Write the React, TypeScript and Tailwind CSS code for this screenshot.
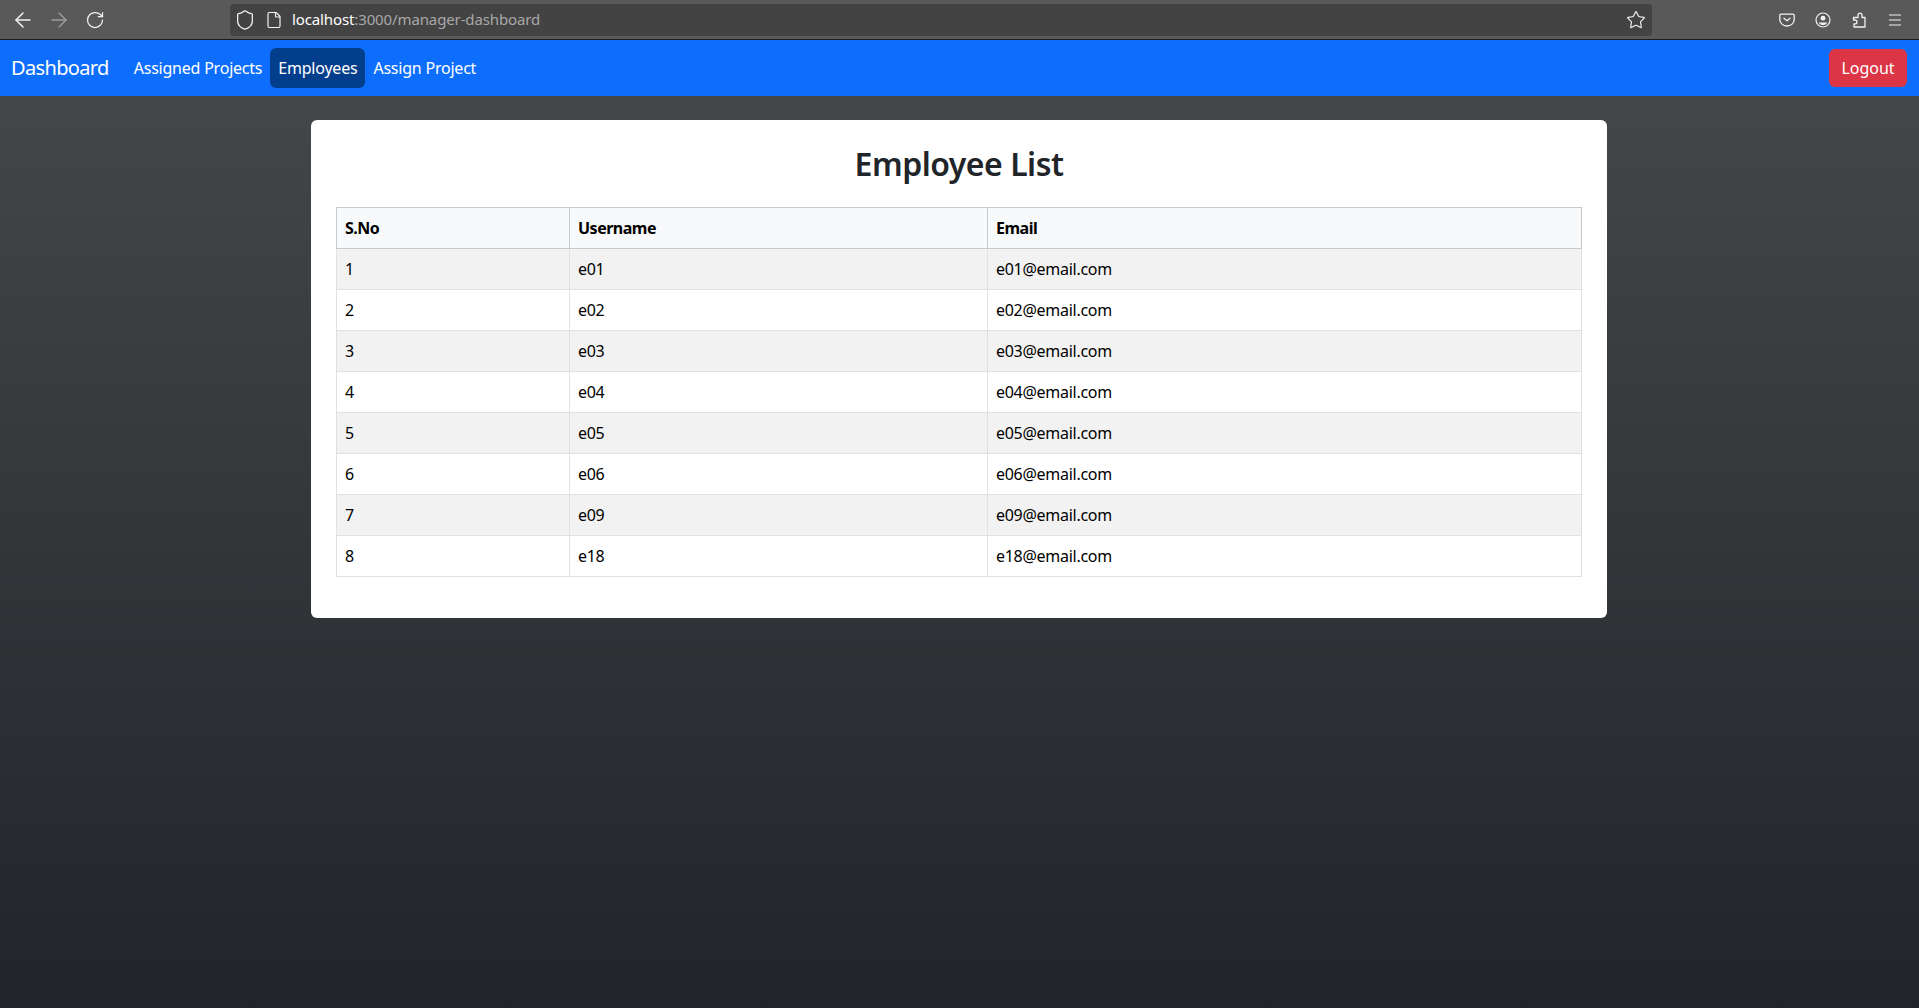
import { ArrowLeft, ArrowRight, RotateCw, Shield, File, Star } from "lucide-react"

const employees = [
  { sno: 1, username: "e01", email: "e01@email.com" },
  { sno: 2, username: "e02", email: "e02@email.com" },
  { sno: 3, username: "e03", email: "e03@email.com" },
  { sno: 4, username: "e04", email: "e04@email.com" },
  { sno: 5, username: "e05", email: "e05@email.com" },
  { sno: 6, username: "e06", email: "e06@email.com" },
  { sno: 7, username: "e09", email: "e09@email.com" },
  { sno: 8, username: "e18", email: "e18@email.com" },
]

function PocketIcon() {
  return (
    <svg width="16" height="16" viewBox="0 0 16 16" fill="none" stroke="currentColor" strokeWidth="1.3" strokeLinecap="round" strokeLinejoin="round">
      <path d="M2 2.2h12a1.2 1.2 0 0 1 1.2 1.2V7.6a7.2 6.4 0 0 1-14.4 0V3.4A1.2 1.2 0 0 1 2 2.2z" />
      <path d="M5 6.2 8 8.8l3-2.6" />
    </svg>
  )
}

function AccountIcon() {
  return (
    <svg width="16" height="16" viewBox="0 0 16 16" fill="none">
      <circle cx="8" cy="8" r="7" stroke="currentColor" strokeWidth="1.2" />
      <circle cx="8" cy="6.2" r="2.4" fill="currentColor" />
      <path d="M3.6 10.6h8.8a5 5 0 0 1-8.8 0z" fill="currentColor" />
    </svg>
  )
}

function ExtensionIcon() {
  return (
    <svg width="16" height="16" viewBox="0 0 16 16" fill="none" stroke="currentColor" strokeWidth="1.3" strokeLinejoin="round">
      <path d="M2.5 5.5H7V3.2a2 2 0 0 1 4 0v2.3h3V15H3v-3.2h1a1.9 1.9 0 0 0 0-3.8H2.5z" />
    </svg>
  )
}

function MenuIcon() {
  return (
    <svg width="16" height="16" viewBox="0 0 16 16" fill="none" stroke="currentColor" strokeWidth="1.2">
      <path d="M2 3h12M2 8h12M2 13h12" />
    </svg>
  )
}

function ToolButton({ children }: { children: React.ReactNode }) {
  return <div className="flex w-9 items-center justify-center">{children}</div>
}

function BrowserBar() {
  return (
    <div className="flex h-10 shrink-0 items-center border-b border-[#1c1c1e] bg-[#595959] text-[#f2f2f2]">
      <div className="flex w-[230px] items-center pl-[5px]">
        <ToolButton><ArrowLeft size={24} strokeWidth={1.5} /></ToolButton>
        <ToolButton><ArrowRight size={24} strokeWidth={1.5} className="text-[#9a9a9a]" /></ToolButton>
        <ToolButton><RotateCw size={20} strokeWidth={1.5} /></ToolButton>
      </div>
      <div className="flex h-8 w-[1422px] items-center rounded bg-[#434343] pl-[4px] pr-[6px]">
        <Shield size={22} strokeWidth={1.4} />
        <File size={18} strokeWidth={1.6} className="ml-[9px]" />
        <span className="ml-[9px] text-[15px] tracking-[-0.12px] text-white">localhost<span className="text-[#a8a8a8]">:3000/manager-dashboard</span></span>
        <Star size={20} strokeWidth={1.4} className="ml-auto" />
      </div>
      <div className="ml-auto flex items-center pr-[6px]">
        <ToolButton><PocketIcon /></ToolButton>
        <ToolButton><AccountIcon /></ToolButton>
        <ToolButton><ExtensionIcon /></ToolButton>
        <ToolButton><MenuIcon /></ToolButton>
      </div>
    </div>
  )
}

function Navbar() {
  return (
    <nav className="flex h-14 shrink-0 items-center bg-[#0d6efd] pl-[11px] pr-3 text-white">
      <a className="mr-[17px] text-[20px] tracking-[-0.65px]">Dashboard</a>
      <a className="p-2 text-base leading-6 tracking-[-0.22px]">Assigned Projects</a>
      <a className="rounded-md bg-[#033e8c] p-2 text-base leading-6 tracking-[-0.22px]">Employees</a>
      <a className="p-2 text-base leading-6 tracking-[-0.22px]">Assign Project</a>
      <button className="ml-auto h-[38px] w-[78px] rounded-md bg-[#dc3545] text-base text-white">Logout</button>
    </nav>
  )
}

export default function App() {
  return (
    <div className="flex min-h-screen flex-col bg-[#212529] font-['Noto_Sans',sans-serif] text-[#212529]">
      <BrowserBar />
      <Navbar />
      <main className="flex flex-1 justify-center bg-gradient-to-b from-[#43474a] to-[#212529] pr-px pt-6">
        <div className="h-[498px] w-[1296px] rounded-md bg-white p-[25px]">
          <h2 className="mb-6 text-center text-[32px] font-semibold leading-[38px] tracking-[-0.5px]">Employee List</h2>
          <table className="w-full table-fixed border-collapse text-base text-black">
            <colgroup>
              <col className="w-[233px]" />
              <col className="w-[418px]" />
              <col />
            </colgroup>
            <thead>
              <tr className="h-[41px] bg-[#f8f9fa] font-bold tracking-[-0.5px]">
                <th className="border border-[#c8c9ca] p-2 text-left leading-6">S.No</th>
                <th className="border border-[#c8c9ca] p-2 text-left leading-6">Username</th>
                <th className="border border-[#c8c9ca] p-2 text-left leading-6">Email</th>
              </tr>
            </thead>
            <tbody className="tracking-[-0.28px]">
              {employees.map(e => (
                <tr key={e.sno} className="h-[41px] odd:bg-[#f2f2f2]">
                  <td className="border border-[#dee2e6] p-2 leading-6">{e.sno}</td>
                  <td className="border border-[#dee2e6] p-2 leading-6">{e.username}</td>
                  <td className="border border-[#dee2e6] p-2 leading-6">{e.email}</td>
                </tr>
              ))}
            </tbody>
          </table>
        </div>
      </main>
    </div>
  )
}
